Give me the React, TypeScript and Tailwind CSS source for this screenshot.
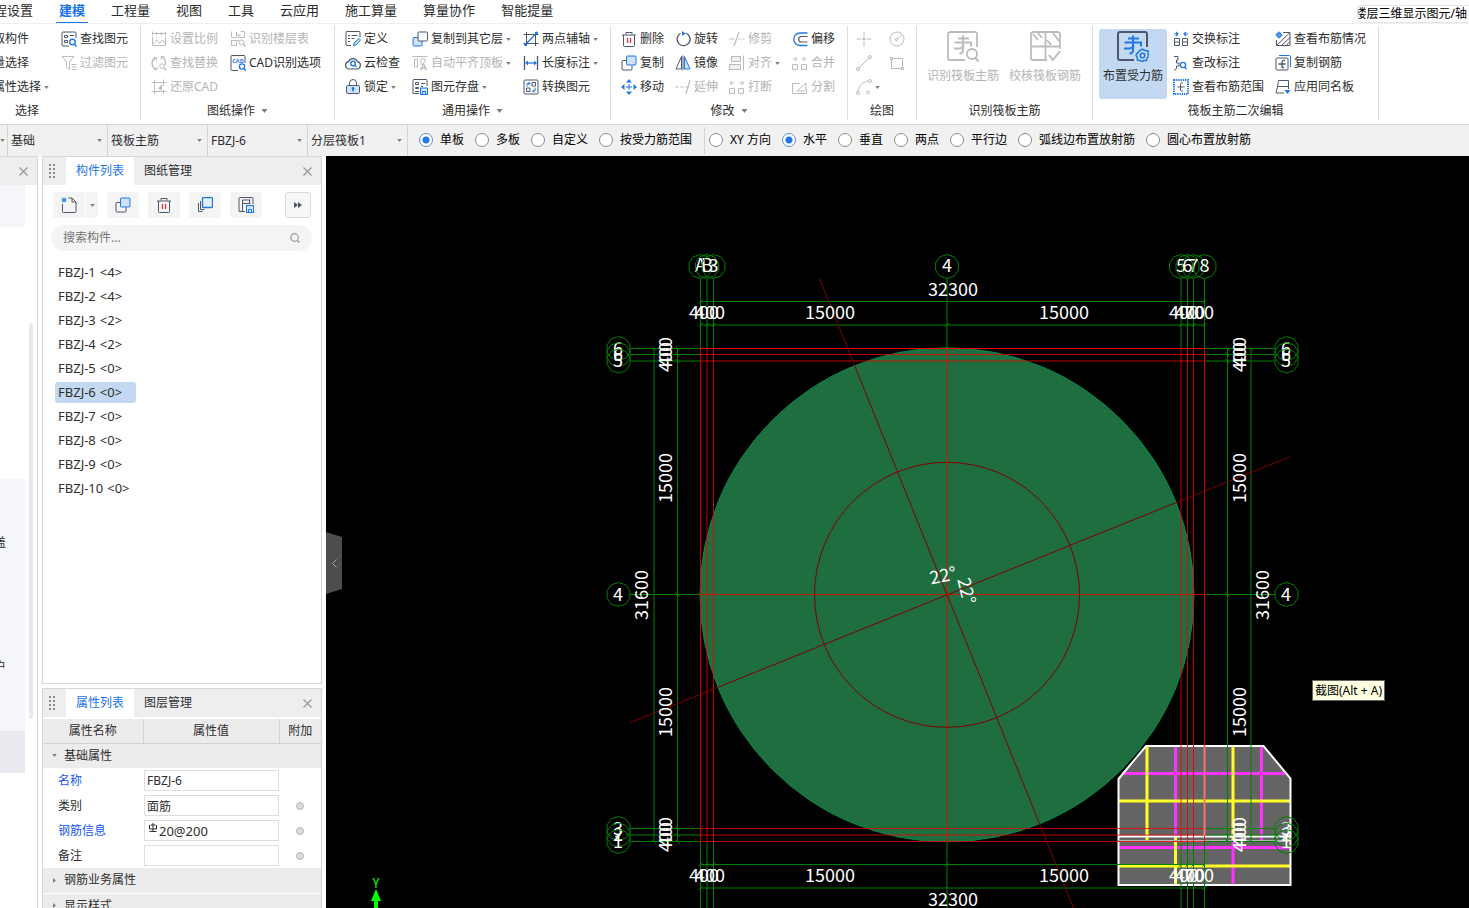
import { useState } from 'react';
import type { ReactNode } from 'react';
import clsx from 'clsx';

const INK = '#4d576b';
const BLUE = '#1f78e6';
const PALE = '#cfe2f8';
const GREY = '#bcbcbc';
const RED = '#d9363e';

// 16x16 toolbar drawings
const icons: Record<string, ReactNode> = {
  findElement: (
    <>
      <path d="M15 7V2a1 1 0 0 0-1-1H2a1 1 0 0 0-1 1v12a1 1 0 0 0 1 1h6" stroke={INK} />
      <path d="M3.5 4.5h3v2h-3zM3.5 9.5h3v2h-3zM9 4.5h4" stroke={INK} />
      <circle cx="11.5" cy="11" r="2.8" stroke={BLUE} strokeWidth="1.4" />
      <path d="M13.5 13.2l2 2.3" stroke={BLUE} strokeWidth="1.4" />
    </>
  ),
  filter: <path d="M1 1.500h12L8.500 7v7.500L5.500 12V7zM10.500 9.500h5M10.500 12h5M10.500 14.500h5" stroke={GREY} />,
  pick: <path d="M2 2l5 12 2-5 5-2z" stroke={INK} />,
  scale: (
    <>
      <path d="M1 2.500h14M1.500 0.500v4M14.500 0.500v4M5.500 1v3M10.500 1v3" stroke={GREY} />
      <path d="M1.500 6v8.500h13V6M2 13l3.500-4 3 3.500 3-3.500 3 4" stroke={GREY} />
    </>
  ),
  replace: (
    <>
      <path d="M5 14A6 6 0 0 1 4.500 3M11 2a6 6 0 0 1 3 8" stroke={GREY} strokeWidth="1.400" />
      <path d="M2.500 2.500h3v3M13 1.500h-3v3M3 14.500h3v-3" stroke={GREY} />
      <circle cx="11" cy="11" r="2.300" stroke={GREY} />
      <path d="M12.700 12.700l2.300 2.500" stroke={GREY} strokeWidth="1.400" />
    </>
  ),
  restore: (
    <>
      <path d="M3.500 0.500v14.500M0.500 3.500h15M12.500 0.500v5M0.500 12.500h15M12.500 11v4" stroke={GREY} />
      <path d="M13 6.500c-2.500 0-4 .500-5 2" stroke={GREY} />
      <path d="M7 9.500l4-3v5z" fill={GREY} />
    </>
  ),
  floorTable: (
    <>
      <path d="M1.500 0.500v6h5v-4M6.500 1v3h4M10.500 0.500h4v6h-6v-3M0.500 9.500h6v5h-5v-5M9 9.500H7" stroke={GREY} />
      <circle cx="11.500" cy="11.500" r="2.500" stroke={GREY} />
      <path d="M13.300 13.300l2.200 2.200" stroke={GREY} strokeWidth="1.400" />
    </>
  ),
  cad: (
    <>
      <path d="M15 8V1.500a1 1 0 0 0-1-1H2a1 1 0 0 0-1 1v13a1 1 0 0 0 1 1h6" stroke={INK} />
      <text x="8" y="7.500" fontSize="5.500" fontWeight="700" textAnchor="middle" fill={BLUE}>CAD</text>
      <circle cx="12" cy="11.500" r="2.600" stroke={BLUE} strokeWidth="1.300" />
      <path d="M13.800 13.400l2 2.300" stroke={BLUE} strokeWidth="1.400" />
    </>
  ),
  define: (
    <>
      <path d="M15 6V1.500a1 1 0 0 0-1-1H2a1 1 0 0 0-1 1v12a1 1 0 0 0 1 1h4" stroke={INK} />
      <path d="M3 4.500h2M6.500 4.500h6M3 7.500h2M6.500 7.500h3M3 10.500h2" stroke={INK} />
      <path d="M8.500 14.500l.500-2.500 5-4.500 1.500 1.500-4.500 5z" fill={PALE} stroke={BLUE} />
    </>
  ),
  cloudCheck: (
    <>
      <path d="M4 14a3.700 3.700 0 0 1-.500-7.300 4.800 4.800 0 0 1 9 0A3.700 3.700 0 0 1 12 14z" stroke={INK} strokeWidth="1.200" />
      <circle cx="8" cy="8.500" r="2.300" stroke={BLUE} strokeWidth="1.400" />
      <path d="M9.800 10.300l1.700 1.700" stroke={BLUE} strokeWidth="1.400" />
    </>
  ),
  lock: (
    <>
      <rect x="1.500" y="6.500" width="13" height="8" rx="1" fill={PALE} stroke={INK} />
      <path d="M4.500 6V4a3.500 3.500 0 0 1 7 0v2" stroke={INK} />
      <path d="M8 12.500V10" stroke={BLUE} strokeWidth="1.500" />
      <circle cx="8" cy="9.500" r="1.400" fill={BLUE} />
    </>
  ),
  copyFloor: (
    <>
      <rect x="1" y="6.500" width="9" height="8.500" rx="1" fill={PALE} stroke={BLUE} />
      <rect x="6" y="1" width="9.500" height="9" rx="1" fill="#fff" stroke={INK} />
    </>
  ),
  alignTop: (
    <>
      <path d="M0.500 1.500h15M2.500 4h3v8h-3zM9 10V4h4v4" stroke={GREY} />
      <path d="M8.500 15.500l3-7 3 7M9.500 13h4" stroke={GREY} strokeWidth="1.400" />
    </>
  ),
  saveElement: (
    <>
      <path d="M15 7V1.500a1 1 0 0 0-1-1H2a1 1 0 0 0-1 1v13h6" stroke={INK} />
      <path d="M3.500 3.500h3v2h-3zM9 4.500h4M3.500 8.500h3v1h-3zM3 12.500h4M9 7.500h2" stroke={INK} />
      <rect x="8.500" y="9" width="7" height="6.500" fill={PALE} stroke={BLUE} />
      <path d="M10.500 15v-2.500h3V15" stroke={BLUE} />
    </>
  ),
  auxAxis: (
    <>
      <path d="M3.500 1v14M12.500 1v14M0.500 3.500h15M0.500 12.500h15" stroke={INK} />
      <path d="M2.500 13.500L14 1.500" stroke={BLUE} strokeWidth="1.300" />
      <circle cx="13.500" cy="2" r="1.500" fill={BLUE} />
      <circle cx="2.500" cy="13.500" r="1.500" fill={BLUE} />
    </>
  ),
  length: (
    <>
      <path d="M1.500 1v14M14.500 1v14" stroke={INK} strokeWidth="1.300" />
      <path d="M3 8h10" stroke={BLUE} strokeWidth="1.300" />
      <path d="M2 8l3-2.500v5zM14 8l-3-2.500v5z" fill={BLUE} />
    </>
  ),
  convert: (
    <>
      <rect x="1" y="1" width="14" height="14" rx="1" stroke={INK} />
      <path d="M9 3.500h3.500V7H9zM3.500 9H7v3.500H3.500z" stroke={INK} />
      <path d="M4 7.500V4.500h3M5.500 3l1.500 1.500L5.500 6M12 8.500v3.500H9.500M11 10.500L9.500 12l1.500 1.500" stroke={BLUE} />
    </>
  ),
  trash: (
    <>
      <path d="M1 4h14M5 3.500V1.500h6v2M2.500 4v10.500a.800.800 0 0 0 1 1h9a.800.800 0 0 0 1-1V4" stroke={INK} />
      <path d="M6.500 7v5M9.500 7v5" stroke={RED} strokeWidth="1.300" />
    </>
  ),
  copy: (
    <>
      <rect x="5.500" y="1" width="9.500" height="9" rx="1" fill={PALE} stroke={BLUE} />
      <path d="M5 5.500H2a1 1 0 0 0-1 1V14a1 1 0 0 0 1 1h8a1 1 0 0 0 1-1v-3.500" stroke={INK} />
    </>
  ),
  copyStack: (
    <>
      <rect x="5.500" y="0.500" width="10" height="10" rx="1" fill="#e3effd" stroke={BLUE} strokeWidth="1.300" />
      <path d="M3.500 4v8.500h4M1.500 6v8.500h4" stroke={INK} />
    </>
  ),
  move: (
    <>
      <path d="M5 8h6M8 5v6" stroke={BLUE} />
      <path d="M8 0l3 3.500H5zM8 16l3-3.500H5zM0 8l3.500-3v6zM16 8l-3.500-3v6z" fill={BLUE} />
    </>
  ),
  rotate: (
    <>
      <path d="M5.500 2.500A6.500 6.500 0 1 0 10.500 2" stroke={INK} strokeWidth="1.300" />
      <path d="M7 0v5l3.500-2.500z" fill={BLUE} />
    </>
  ),
  mirror: (
    <>
      <path d="M6.500 1.500v12.500H1z" stroke={INK} />
      <path d="M9.500 1.500v12.500H15z" fill={PALE} stroke={BLUE} />
      <path d="M8 0.500v15" stroke={INK} />
    </>
  ),
  trim: <path d="M0.500 8h5M9.500 8h2M13.500 8h2M5 15L10 1" stroke={GREY} strokeWidth="1.200" />,
  align: (
    <>
      <rect x="2.500" y="1.500" width="9" height="5" fill="#f0f0f0" stroke={GREY} />
      <rect x="0.500" y="9.500" width="11" height="5" fill="#f0f0f0" stroke={GREY} />
      <path d="M14.500 0.500v15" stroke={GREY} />
    </>
  ),
  extend: <path d="M0.500 8h3M5.500 8h3M10 8h3M11 15l4-14" stroke={GREY} strokeWidth="1.200" />,
  breakApart: <path d="M0.500 9.500h5v5h-5zM9.500 9.500h5v5h-5zM1 4h4M3 2L1 4l2 2M10.500 4h4M12.500 2l2 2-2 2" stroke={GREY} />,
  offset: (
    <>
      <path d="M15.500 2H8a5.800 5.800 0 0 0 0 12.500h7.500" stroke={BLUE} strokeWidth="1.300" />
      <path d="M15.500 5.500H9a2.800 2.800 0 0 0 0 5.500h6.500" stroke={INK} strokeWidth="1.200" />
    </>
  ),
  merge: <path d="M0.500 9.500h5v5h-5zM9.500 9.500h5v5h-5zM1 4h4M3 2l2 2-2 2M10.500 4h4M12.500 2l-2 2 2 2" stroke={GREY} />,
  split: <path d="M8 4.500H0.500v10h14v-4M5 12l9-8v6.500l-2 1.500z" stroke={GREY} />,
  point: (
    <>
      <path d="M8 0.500v5M8 10.500v5M0.500 8h5M10.500 8h5" stroke={GREY} />
      <circle cx="8" cy="8" r="1.600" fill={GREY} />
    </>
  ),
  line: (
    <>
      <path d="M2.500 13.500l11-11" stroke={GREY} />
      <circle cx="2" cy="14" r="1.500" stroke={GREY} />
      <circle cx="14" cy="2" r="1.500" stroke={GREY} />
    </>
  ),
  arc: (
    <>
      <path d="M2 12.500C3 6 7 3 12.500 2" stroke={GREY} />
      <circle cx="2" cy="14" r="1.500" stroke={GREY} />
      <circle cx="14" cy="2" r="1.500" stroke={GREY} />
      <circle cx="12" cy="13.500" r="1.500" stroke={GREY} />
    </>
  ),
  circle: (
    <>
      <circle cx="8" cy="8" r="7" stroke={GREY} />
      <path d="M8 8l4.500-3.500" stroke={GREY} />
      <circle cx="7.500" cy="8.500" r="1.200" stroke={GREY} />
    </>
  ),
  rect: (
    <>
      <rect x="2.500" y="3.500" width="11" height="10" stroke={GREY} />
      <rect x="1.500" y="2.500" width="2" height="2" fill="#fff" stroke={GREY} />
      <rect x="12.500" y="12.500" width="2" height="2" fill="#fff" stroke={GREY} />
    </>
  ),
  swapMark: (
    <>
      <path d="M1 3h4M11 3h4M3 1l2 2-2 2M13 1l-2 2 2 2" stroke={BLUE} strokeWidth="1.200" />
      <path d="M1.500 7.500h5v7h-5zM9.500 7.500h5v7h-5zM1.500 11h5M9.500 11h5" stroke={INK} />
    </>
  ),
  checkMark: (
    <>
      <path d="M1 1.500h4v3.500H3.500v3H6v3H3.500v2.500L1 15.500" stroke={INK} />
      <circle cx="10" cy="10" r="2.600" stroke={BLUE} strokeWidth="1.300" />
      <path d="M11.800 12l1.700 2" stroke={BLUE} strokeWidth="1.300" />
    </>
  ),
  range: (
    <>
      <rect x="1" y="1" width="14" height="14" stroke={BLUE} strokeWidth="2" strokeDasharray="1.300 .900" />
      <path d="M10 4c-3-.500-2.500 1-2.500 4v3.500M4.500 8h7M8 12h2" stroke={INK} />
    </>
  ),
  viewRebar: (
    <>
      <path d="M8 1.500h7v13H1.500V9M2 14l12.500-12M6.500 14.500l8.500-8M11 14.500l4-4" stroke={INK} />
      <circle cx="4" cy="4" r="2.200" stroke={BLUE} strokeWidth="1.200" />
      <path d="M4 0.500v7M0.500 4h7" stroke={BLUE} />
    </>
  ),
  copyRebar: (
    <>
      <rect x="1" y="3" width="12" height="12" rx="1" stroke={INK} />
      <path d="M4 0.500h10.500a1 1 0 0 1 1 1V12" stroke={BLUE} />
      <path d="M10 5.500c-2.500-.500-3 .500-3 3.500v3.500M3.500 9h7M7 12.500h2" stroke={INK} strokeWidth="1.300" />
    </>
  ),
  sameName: (
    <>
      <path d="M3.500 1.500h10v6h-11zM2.500 7.500L1 14h8M13.500 7v3" stroke={INK} />
      <path d="M9.500 11h6l-3 4z" fill={BLUE} />
    </>
  ),
  newItem: (
    <>
      <path d="M1.500 7v7.500a.800.800 0 0 0 1 1H14a.800.800 0 0 0 1-1V5L11 1H7.500M11 1v4h4" stroke={INK} />
      <path d="M3 0.500v5M0.500 3h5M1 1l4 4M5 1L1 5" stroke={BLUE} />
    </>
  ),
  saveList: (
    <>
      <path d="M15 7V1.500a1 1 0 0 0-1-1H2a1 1 0 0 0-1 1v13h6M4.500 3v12M11.500 3v4M4.500 6.500h8M4.500 3h8" stroke={INK} />
      <rect x="8.500" y="8.500" width="7" height="7" fill={PALE} stroke={BLUE} />
      <path d="M10.500 15v-2.500h3V15" stroke={BLUE} />
    </>
  ),
};

function Icon({ name }: { name: string }) {
  return (
    <svg viewBox="0 0 16 16" className="size-4 shrink-0" fill="none" aria-hidden="true">
      {icons[name]}
    </svg>
  );
}

function Caret({ big }: { big?: boolean }) {
  return (
    <svg viewBox="0 0 6 4" className={clsx('shrink-0', big ? 'h-1 w-[7px]' : 'h-[3px] w-[5px]')} aria-hidden="true">
      <path d="M0 0h6L3 4z" fill="#7d7d7d" />
    </svg>
  );
}

interface ToolProps {
  icon: string;
  label?: string;
  off?: boolean;
  menu?: boolean;
}

function Tool({ icon, label, off, menu }: ToolProps) {
  return (
    <button className={clsx('flex h-6 items-center gap-[3px] whitespace-nowrap', off ? 'text-[#b4b4b4]' : 'text-[#2e2e2e]')}>
      <Icon name={icon} />
      {label && <span>{label}</span>}
      {menu && <Caret />}
    </button>
  );
}

interface GroupProps {
  label: string;
  menu?: boolean;
  className: string;
  children: ReactNode;
}

function Group({ label, menu, className, children }: GroupProps) {
  return (
    <section className={clsx('flex h-[94px] shrink-0 flex-col border-r border-[#dcdcdc] pt-px', className)}>
      <div className="flex h-[72px]">{children}</div>
      <div className="flex h-5 items-center justify-center gap-1.5 pt-1 text-[#2e2e2e]">
        {label}
        {menu && <Caret big />}
      </div>
    </section>
  );
}

function RebarGlyph({ color }: { color: string }) {
  return <path d="M16 5.500V20c0 2.500-1 3.500-3.500 3.500M11 8.500h11M7.500 12.500H24v4M7 18.500h5c3 0 4-1.500 5-3" stroke={color} strokeWidth="2" />;
}

function BigTool({ label, off, active, children }: { label: string; off?: boolean; active?: boolean; children: ReactNode }) {
  return (
    <button
      className={clsx(
        'mt-0.5 flex h-[70px] flex-col items-center gap-1 rounded-[3px] pt-px whitespace-nowrap',
        off ? 'w-[72px] text-[#b4b4b4]' : 'w-[68px] text-[#2e2e2e]',
        active && 'bg-[#c3d9f1]',
      )}
    >
      <svg viewBox="0 0 32 32" className="size-8" fill="none" aria-hidden="true">
        {children}
      </svg>
      <span className="leading-5">{label}</span>
    </button>
  );
}

function Ribbon() {
  return (
    <div className="flex overflow-hidden border-b border-[#d6d6d6] pt-0.5 pb-1">
      <Group label="选择" className="-ml-[86px] w-[227px]">
        <div className="grid grid-flow-col grid-cols-[99px_auto] grid-rows-3 pl-12">
          <Tool icon="pick" label="拾取构件" />
          <Tool icon="pick" label="批量选择" />
          <Tool icon="pick" label="按属性选择" menu />
          <Tool icon="findElement" label="查找图元" />
          <Tool icon="filter" label="过滤图元" off />
        </div>
      </Group>
      <Group label="图纸操作" menu className="w-[194px]">
        <div className="grid grid-flow-col grid-cols-[79px_auto] grid-rows-3 pl-2.5">
          <Tool icon="scale" label="设置比例" off />
          <Tool icon="replace" label="查找替换" off />
          <Tool icon="restore" label="还原CAD" off />
          <Tool icon="floorTable" label="识别楼层表" off />
          <Tool icon="cad" label="CAD识别选项" />
        </div>
      </Group>
      <Group label="通用操作" menu className="w-[276px]">
        <div className="grid grid-flow-col grid-cols-[67px_111px_auto] grid-rows-3 pl-2.5">
          <Tool icon="define" label="定义" />
          <Tool icon="cloudCheck" label="云检查" />
          <Tool icon="lock" label="锁定" menu />
          <Tool icon="copyFloor" label="复制到其它层" menu />
          <Tool icon="alignTop" label="自动平齐顶板" off menu />
          <Tool icon="saveElement" label="图元存盘" menu />
          <Tool icon="auxAxis" label="两点辅轴" menu />
          <Tool icon="length" label="长度标注" menu />
          <Tool icon="convert" label="转换图元" />
        </div>
      </Group>
      <Group label="修改" menu className="w-[237px]">
        <div className="grid grid-flow-col grid-cols-[54px_54px_63px_auto] grid-rows-3 pl-2.5">
          <Tool icon="trash" label="删除" />
          <Tool icon="copy" label="复制" />
          <Tool icon="move" label="移动" />
          <Tool icon="rotate" label="旋转" />
          <Tool icon="mirror" label="镜像" />
          <Tool icon="extend" label="延伸" off />
          <Tool icon="trim" label="修剪" off />
          <Tool icon="align" label="对齐" off menu />
          <Tool icon="breakApart" label="打断" off />
          <Tool icon="offset" label="偏移" />
          <Tool icon="merge" label="合并" off />
          <Tool icon="split" label="分割" off />
        </div>
      </Group>
      <Group label="绘图" className="w-[69px]">
        <div className="grid grid-flow-col grid-cols-[33px_auto] grid-rows-3 pl-2">
          <Tool icon="point" off />
          <Tool icon="line" off />
          <Tool icon="arc" off menu />
          <Tool icon="circle" off />
          <Tool icon="rect" off />
        </div>
      </Group>
      <Group label="识别筏板主筋" className="w-[176px]">
        <div className="flex gap-2.5 pl-2.5">
          <BigTool label="识别筏板主筋" off>
            <path d="M30 17V4a2 2 0 0 0-2-2H3a2 2 0 0 0-2 2v24a2 2 0 0 0 2 2h15" stroke={GREY} strokeWidth="1.800" />
            <RebarGlyph color={GREY} />
            <circle cx="25" cy="24" r="5" fill="#fff" stroke={GREY} strokeWidth="1.800" />
            <path d="M28.500 28l3 3.500" stroke={GREY} strokeWidth="2" />
          </BigTool>
          <BigTool label="校核筏板钢筋" off>
            <path d="M31 19V4a2 2 0 0 0-2-2H4a2 2 0 0 0-2 2v24a2 2 0 0 0 2 2h14" stroke={GREY} strokeWidth="1.800" />
            <path d="M16.500 2v28M2 16.500h29M4 4l5 6M9 3l4 5M18 10l4 5M24 3l6 8" stroke={GREY} strokeWidth="1.800" />
            <path d="M20 25l4 5 7-9" stroke={GREY} strokeWidth="2" />
          </BigTool>
        </div>
      </Group>
      <Group label="筏板主筋二次编辑" className="w-[286px]">
        <div className="flex gap-1.5 pl-1.5">
          <BigTool label="布置受力筋" active>
            <path d="M30 17V4a2 2 0 0 0-2-2H3a2 2 0 0 0-2 2v24a2 2 0 0 0 2 2h14" stroke={INK} strokeWidth="2" />
            <RebarGlyph color={BLUE} />
            <path d="M23 20.500l2.500-1.500 2.500 1.500 3 .500v3l1 2-2 2-.500 2.500h-3L25.500 32 23 30.500l-2.500-.500-.500-3-1-2 1.500-2z" fill="#c3d9f1" stroke={BLUE} strokeWidth="1.500" />
            <circle cx="25.500" cy="25.500" r="2.300" stroke={BLUE} strokeWidth="1.500" />
          </BigTool>
          <div className="grid grid-flow-col grid-cols-[102px_auto] grid-rows-3">
            <Tool icon="swapMark" label="交换标注" />
            <Tool icon="checkMark" label="查改标注" />
            <Tool icon="range" label="查看布筋范围" />
            <Tool icon="viewRebar" label="查看布筋情况" />
            <Tool icon="copyRebar" label="复制钢筋" />
            <Tool icon="sameName" label="应用同名板" />
          </div>
        </div>
      </Group>
    </div>
  );
}

const menuTabs = ['工程设置', '建模', '工程量', '视图', '工具', '云应用', '施工算量', '算量协作', '智能提量'];

function MenuBar() {
  return (
    <nav className="flex h-6 items-center overflow-hidden border-b border-[#efefef]">
      <div className="-ml-[22px] flex gap-5 text-[13px]">
        {menuTabs.map(tab => (
          <button
            key={tab}
            className={clsx(
              'h-6 border-b-2 px-[3px] whitespace-nowrap',
              tab === '建模' ? 'border-[#1a73e8] font-bold text-[#1a73e8]' : 'border-transparent text-[#2b2b2b]',
            )}
          >
            {tab}
          </button>
        ))}
      </div>
      <div className="mt-1 ml-auto flex h-[18px] w-28 items-center justify-end overflow-hidden rounded-l-sm border border-r-0 border-[#e4e4e4] pr-0.5 whitespace-nowrap text-black">
        楼层三维显示图元/轴
      </div>
    </nav>
  );
}

const combos = [
  { name: '楼层', value: '基础' },
  { name: '构件类型', value: '筏板主筋' },
  { name: '构件', value: 'FBZJ-6' },
  { name: '分层', value: '分层筏板1' },
];

function RadioSet({ name, options, initial }: { name: string; options: string[]; initial: string }) {
  const [value, setValue] = useState(initial);
  return (
    <div className="flex items-center gap-[11px]">
      {options.map(option => (
        <label key={option} className="flex items-center gap-[7px] whitespace-nowrap text-black">
          <input
            type="radio"
            name={name}
            checked={value === option}
            onChange={() => setValue(option)}
            className="size-3.5 shrink-0 appearance-none rounded-full border border-[#8c8c8c] bg-white checked:border-[#5f8fc9] checked:bg-[radial-gradient(circle,#1f78e6_3px,#fff_4px)]"
          />
          {option}
        </label>
      ))}
    </div>
  );
}

function OptionBar() {
  return (
    <div className="flex h-[31px] items-stretch overflow-hidden bg-[#f1f1f1]">
      <div className="flex w-2 shrink-0 items-center border-r border-[#d3d3d3]">
        <Caret />
      </div>
      {combos.map(combo => (
        <div key={combo.name} className="relative w-[100px] shrink-0 border-r border-[#d3d3d3]">
          <select aria-label={combo.name} className="h-full w-full appearance-none bg-transparent pl-[3px] text-[#2e2e2e] outline-none">
            <option>{combo.value}</option>
          </select>
          <div className="pointer-events-none absolute inset-y-0 right-[5px] flex items-center">
            <Caret />
          </div>
        </div>
      ))}
      <div className="flex items-center pb-0.5 pl-[11px]">
        <RadioSet name="scope" initial="单板" options={['单板', '多板', '自定义', '按受力筋范围']} />
      </div>
      <div className="my-0.5 mr-1 ml-3 w-px shrink-0 bg-[#d3d3d3]" />
      <div className="flex items-center pb-0.5">
        <RadioSet
          name="direction"
          initial="水平"
          options={['XY 方向', '水平', '垂直', '两点', '平行边', '弧线边布置放射筋', '圆心布置放射筋']}
        />
      </div>
    </div>
  );
}

function CloseButton() {
  return (
    <button aria-label="关闭" className="ml-auto flex w-7 items-center justify-center">
      <svg viewBox="0 0 9 9" className="size-[9px]" fill="none">
        <path d="M.500.500l8 8M8.500.500l-8 8" stroke="#9a9a9a" strokeWidth="1.300" />
      </svg>
    </button>
  );
}

function NavStrip() {
  return (
    <aside className="flex w-[38px] shrink-0 flex-col border-t border-r border-[#d5d5d5] bg-white">
      <div className="flex h-7 shrink-0 bg-[#eeeef0]">
        <CloseButton />
      </div>
      <div className="flex min-h-0 flex-1">
        <div className="flex w-[25px] flex-col">
          <div className="h-[42px] bg-[#f5f6f9]" />
          <div className="h-[252px]" />
          <div className="h-[252px] overflow-hidden bg-[#f5f6f9] pt-[54px] text-[#2e2e2e]">
            <div className="-ml-1.5 leading-5">盖</div>
            <div className="mt-[104px] -ml-1.5 leading-5">户</div>
          </div>
          <div className="h-[42px] bg-[#e9ebf0]" />
        </div>
        <div className="mt-[138px] ml-1 h-[396px] w-1 rounded-full bg-[#e9e9e9]" />
      </div>
    </aside>
  );
}

function PanelHeader({ tabs }: { tabs: [string, string] }) {
  return (
    <div className="flex h-7 shrink-0 bg-[#eeeef0]">
      <svg viewBox="0 0 6 14" className="mt-[7px] mr-[11px] ml-1.5 h-3.5 w-1.5" fill="#8b8b8b" aria-hidden="true">
        {[0, 4, 8, 12].map(y => (
          <path key={y} d={`M0 ${y}h2v2h-2zM4 ${y}h2v2h-2z`} />
        ))}
      </svg>
      <button className="w-[68px] bg-white text-[#1a73e8]">{tabs[0]}</button>
      <button className="w-[68px] text-[#2e2e2e]">{tabs[1]}</button>
      <CloseButton />
    </div>
  );
}

function ComponentPanel() {
  const [selected, setSelected] = useState('FBZJ-6');
  const counts = [4, 4, 2, 2, 0, 0, 0, 0, 0, 0];
  return (
    <section className="flex min-h-0 flex-1 flex-col border border-[#d5d5d5] bg-white">
      <PanelHeader tabs={['构件列表', '图纸管理']} />
      <div className="flex items-center gap-[9px] px-2.5 pt-[7px]">
        <div className="flex gap-px">
          <button aria-label="新建" className="flex h-[26px] w-8 items-center justify-center rounded-l-[3px] bg-[#f4f4f4]">
            <Icon name="newItem" />
          </button>
          <button aria-label="新建选项" className="flex h-[26px] w-3 items-center justify-center rounded-r-[3px] bg-[#f4f4f4]">
            <Caret />
          </button>
        </div>
        {['copy', 'trash', 'copyStack', 'saveList'].map(name => (
          <button key={name} aria-label={name} className="flex h-[26px] w-8 items-center justify-center rounded-[3px] bg-[#f4f4f4]">
            <Icon name={name} />
          </button>
        ))}
        <button aria-label="更多" className="ml-auto flex size-[26px] items-center justify-center rounded-[3px] border border-[#dadada] bg-[#f7f7f7]">
          <svg viewBox="0 0 8 6" className="h-1.5 w-2" fill={INK}>
            <path d="M0 0l4 3-4 3zM4 0l4 3-4 3z" />
          </svg>
        </button>
      </div>
      <div className="mt-[7px] mr-[9px] ml-2 flex h-[26px] items-center rounded-full bg-[#f4f4f4] px-3">
        <input
          type="text"
          aria-label="搜索构件"
          placeholder="搜索构件..."
          className="min-w-0 flex-1 bg-transparent text-[#2e2e2e] outline-none placeholder:text-[#757575]"
        />
        <svg viewBox="0 0 10 10" className="size-2.5" fill="none" aria-hidden="true">
          <circle cx="4.500" cy="4.500" r="3.800" stroke="#9a9a9a" strokeWidth="1.200" />
          <path d="M7.500 7.500l2 2" stroke="#9a9a9a" strokeWidth="1.400" />
        </svg>
      </div>
      <ul className="flex flex-col items-start gap-[3px] pt-[11px] pl-3">
        {counts.map((count, i) => {
          const name = `FBZJ-${i + 1}`;
          return (
            <li key={name}>
              <button
                onClick={() => setSelected(name)}
                className={clsx(
                  'flex h-[21px] min-w-[81px] items-center gap-1 rounded-[3px] px-[3px] text-[13px] text-[#2e2e2e]',
                  selected === name && 'bg-[#c3d9f1]',
                )}
              >
                <span>{name}</span>
                <span>{`<${count}>`}</span>
              </button>
            </li>
          );
        })}
      </ul>
    </section>
  );
}

const properties = [
  { name: '名称', value: 'FBZJ-6', link: true, rebar: false, extra: false },
  { name: '类别', value: '面筋', link: false, rebar: false, extra: true },
  { name: '钢筋信息', value: '20@200', link: true, rebar: true, extra: true },
  { name: '备注', value: '', link: false, rebar: false, extra: true },
];

function RebarGrade() {
  return (
    <svg viewBox="0 0 10 10" className="absolute top-[3px] left-1 size-2.5" fill="none" aria-hidden="true">
      <path d="M5 0v8.500M2.500 2h5M1.500 2v4h7V2M1.500 8.500h7" stroke="#2e2e2e" />
    </svg>
  );
}

function PropertyPanel() {
  return (
    <section className="h-[220px] shrink-0 overflow-hidden border border-b-0 border-[#d5d5d5] bg-white">
      <PanelHeader tabs={['属性列表', '图层管理']} />
      <table className="mt-0.5 w-full table-fixed border-collapse text-[#2e2e2e]">
        <colgroup>
          <col className="w-[100px]" />
          <col className="w-[136px]" />
          <col />
        </colgroup>
        <thead>
          <tr className="h-6 border-b border-[#d3d3d3] bg-[#ececec]">
            <th className="border-r border-[#d3d3d3] font-normal">属性名称</th>
            <th className="border-r border-[#d3d3d3] font-normal">属性值</th>
            <th className="font-normal">附加</th>
          </tr>
        </thead>
        <tbody>
          <tr className="h-[25px] bg-[#ececec]">
            <td colSpan={3}>
              <button className="flex items-center gap-[7px] pl-[9px]">
                <Caret />
                基础属性
              </button>
            </td>
          </tr>
          {properties.map(({ name, value, link, rebar, extra }) => (
            <tr key={name} className="h-[25px]">
              <td className={clsx('pl-[15px]', link && 'text-[#1458f0]')}>
                <label htmlFor={name}>{name}</label>
              </td>
              <td>
                <div className="relative ml-px">
                  <input
                    id={name}
                    type="text"
                    defaultValue={value}
                    className={clsx(
                      'block h-[21px] w-full border border-[#dedede] bg-white outline-none',
                      rebar ? 'pl-3.5 text-[13px]' : 'pl-0.5',
                    )}
                  />
                  {rebar && <RebarGrade />}
                </div>
              </td>
              <td>
                {extra && (
                  <input
                    type="checkbox"
                    aria-label={`附加 ${name}`}
                    className="mx-auto block size-2 appearance-none rounded-full border border-[#b4b7bc] bg-[#d9dbdf]"
                  />
                )}
              </td>
            </tr>
          ))}
          {['钢筋业务属性', '显示样式'].map(title => (
            <tr key={title} className="h-[25px] border-b border-white bg-[#ececec]">
              <td colSpan={3}>
                <button className="flex items-center gap-2 pl-2.5">
                  <svg viewBox="0 0 3 5" className="h-[5px] w-[3px]" fill="#7d7d7d" aria-hidden="true">
                    <path d="M0 0l3 2.500L0 5z" />
                  </svg>
                  {title}
                </button>
              </td>
            </tr>
          ))}
        </tbody>
      </table>
    </section>
  );
}

const xAxes = [
  { x: 700.5, name: 'A' },
  { x: 707, name: 'B' },
  { x: 713.5, name: '3' },
  { x: 947, name: '4' },
  { x: 1181, name: '5' },
  { x: 1187.5, name: '6' },
  { x: 1193.5, name: '7' },
  { x: 1204.5, name: '8' },
];

const yAxes = [
  { y: 348.5, name: '6' },
  { y: 354.5, name: '6' },
  { y: 361, name: '5' },
  { y: 594.5, name: '4' },
  { y: 828.5, name: '3' },
  { y: 835, name: '2' },
  { y: 841.5, name: '1' },
];

const xSpans = [
  { at: 704, text: '400' },
  { at: 710, text: '400' },
  { at: 830, text: '15000' },
  { at: 1064, text: '15000' },
  { at: 1184, text: '400' },
  { at: 1190, text: '400' },
  { at: 1199, text: '700' },
];

const ySpans = [
  { at: 352, text: '400' },
  { at: 357, text: '400' },
  { at: 478, text: '15000' },
  { at: 712, text: '15000' },
  { at: 832, text: '400' },
  { at: 837, text: '400' },
];

const LEFT = 700.5;
const RIGHT = 1204.5;
const TOP = 348.5;
const BOTTOM = 841.5;

function Label({ x, y, angle = 0, children }: { x: number; y: number; angle?: number; children: string }) {
  return (
    <text transform={`translate(${x} ${y}) rotate(${angle})`} y="6" textAnchor="middle" fontSize="18" fill="#fff">
      {children}
    </text>
  );
}

// axis bubbles are drawn as coarse polygons
function Bubble({ x, y }: { x: number; y: number }) {
  const points = Array.from({ length: 10 }, (_, i) => {
    const a = (i * Math.PI) / 5 - Math.PI / 2;
    return `${(x + 12 * Math.cos(a)).toFixed(1)},${(y + 12 * Math.sin(a)).toFixed(1)}`;
  });
  return <polygon points={points.join(' ')} fill="none" stroke="#008000" />;
}

function Slab() {
  return (
    <g strokeWidth="3">
      <path d="M1118.500 779L1146 746h117.500l27 32.500V885h-172z" fill="#646464" />
      <path d="M1122 773.500h165M1118 847.500h172M1175.500 746v90M1261.500 746v95M1233 841v44" stroke="#ff33ff" />
      <path d="M1118 801h172M1118 866h172M1147 746v95M1233 746v95M1175.500 836v49" stroke="#ffff26" />
      <path d="M1118.500 779L1146 746h117.500l27 32.500V885h-172z" fill="none" stroke="#fff" strokeWidth="2" />
      <path d="M1118 836.500h172" stroke="#fff" strokeWidth="2" />
      <path d="M1118 841h172" stroke="#b4b4b4" strokeWidth="2" />
    </g>
  );
}

function Drawing() {
  return (
    <svg
      viewBox="326 156 1143 752"
      preserveAspectRatio="xMidYMid slice"
      className="absolute inset-0 h-full w-full font-['Noto_Sans_CJK_SC',sans-serif]"
      fill="none"
      aria-label="筏板平面图"
    >
      <circle cx="947" cy="594.800" r="247" fill="#1f6e40" stroke="#058a48" />
      <Slab />

      <g stroke="#008000">
        {xAxes.map(({ x }) => (
          <path key={x} d={`M${x} 278V${TOP}M${x} ${BOTTOM}V908`} />
        ))}
        {yAxes.map(({ y }) => (
          <path key={y} d={`M630 ${y}H${LEFT}M${RIGHT} ${y}H1275`} />
        ))}
        <path d={`M${LEFT} 301.500H${RIGHT}M${LEFT} 325H${RIGHT}M${LEFT} 864.500H${RIGHT}M${LEFT} 888H${RIGHT}`} />
        <path d={`M654 ${TOP}V${BOTTOM}M677.500 ${TOP}V${BOTTOM}M1227.500 ${TOP}V${BOTTOM}M1251 ${TOP}V${BOTTOM}`} />
        {xAxes.map(({ x }) => (
          <path key={x} d={`M${x - 2} 327l4-4M${x - 2} 866.500l4-4`} />
        ))}
        {yAxes.map(({ y }) => (
          <path key={y} d={`M675.500 ${y - 2}l4 4M1225.500 ${y - 2}l4 4`} />
        ))}
        <path d={`M${LEFT - 2} 303.500l4-4M${RIGHT - 2} 303.500l4-4M${LEFT - 2} 890l4-4M${RIGHT - 2} 890l4-4`} />
        <path d={`M652 ${TOP - 2}l4 4M652 ${BOTTOM - 2}l4 4M1249 ${TOP - 2}l4 4M1249 ${BOTTOM - 2}l4 4`} />
      </g>

      <g stroke="#f00000">
        {xAxes.map(({ x }) => (
          <path key={x} d={`M${x} ${TOP}V${BOTTOM}`} opacity={0.85} />
        ))}
        {yAxes.map(({ y }) => (
          <path key={y} d={`M${LEFT} ${y}H${RIGHT}`} opacity={y === TOP ? 1 : 0.8} />
        ))}
      </g>
      <path d={`M${RIGHT} 746v90`} stroke="#ff7070" strokeWidth="2" />

      <g stroke="#800000">
        <circle cx="947" cy="594.800" r="132.500" />
        <path d="M819.500 278.500L1073.500 908M1290.500 456.500L630.500 722.500" />
      </g>

      {xAxes.map(({ x, name }) => (
        <g key={x}>
          <Bubble x={x} y={266.5} />
          <Label x={x} y={266}>{name}</Label>
        </g>
      ))}
      {yAxes.map(({ y, name }) => (
        <g key={y}>
          <Bubble x={618.5} y={y} />
          <Bubble x={1286.5} y={y} />
          <Label x={618} y={y}>{name}</Label>
          <Label x={1286} y={y}>{name}</Label>
        </g>
      ))}
      {xSpans.map(({ at, text }) => (
        <g key={at}>
          <Label x={at} y={313}>{text}</Label>
          <Label x={at} y={876}>{text}</Label>
        </g>
      ))}
      {ySpans.map(({ at, text }) => (
        <g key={at}>
          <Label x={666} y={at} angle={-90}>{text}</Label>
          <Label x={1240} y={at} angle={-90}>{text}</Label>
        </g>
      ))}
      <Label x={953} y={290}>32300</Label>
      <Label x={953} y={900}>32300</Label>
      <Label x={642} y={595} angle={-90}>31600</Label>
      <Label x={1263} y={595} angle={-90}>31600</Label>
      <Label x={943} y={576} angle={-11}>22°</Label>
      <Label x={966} y={591} angle={77}>22°</Label>

      {/* UCS marker */}
      <text x="376" y="888" fontSize="13" textAnchor="middle" fill="#00ff00">Y</text>
      <path d="M376 889l5 12h-3v7h-4v-7h-3z" fill="#00ff00" />
    </svg>
  );
}

function Viewport() {
  return (
    <main className="relative min-w-0 flex-1 overflow-hidden bg-black">
      <Drawing />
      <button
        aria-label="收起"
        className="absolute top-1/2 left-0 flex h-[62px] w-4 items-center justify-center bg-[#4d4d4d] [clip-path:polygon(0_0,100%_5px,100%_57px,0_100%)]"
      >
        <svg viewBox="0 0 5 9" className="h-[9px] w-[5px]" fill="none">
          <path d="M4.500.500l-4 4 4 4" stroke="#a0a0a0" />
        </svg>
      </button>
      <div
        role="tooltip"
        className="absolute right-[84px] bottom-[207px] flex h-[21px] items-center border border-[#646464] bg-[#ffffe1] px-0.5 whitespace-nowrap text-black"
      >
        截图(Alt + A)
      </div>
    </main>
  );
}

export default function App() {
  return (
    <div className="flex h-screen flex-col overflow-hidden bg-white font-['Noto_Sans','Noto_Sans_CJK_SC',sans-serif] text-xs">
      <MenuBar />
      <Ribbon />
      <OptionBar />
      <div className="flex min-h-0 flex-1">
        <NavStrip />
        <div className="mx-1 flex w-[280px] shrink-0 flex-col gap-1">
          <ComponentPanel />
          <PropertyPanel />
        </div>
        <Viewport />
      </div>
    </div>
  );
}
